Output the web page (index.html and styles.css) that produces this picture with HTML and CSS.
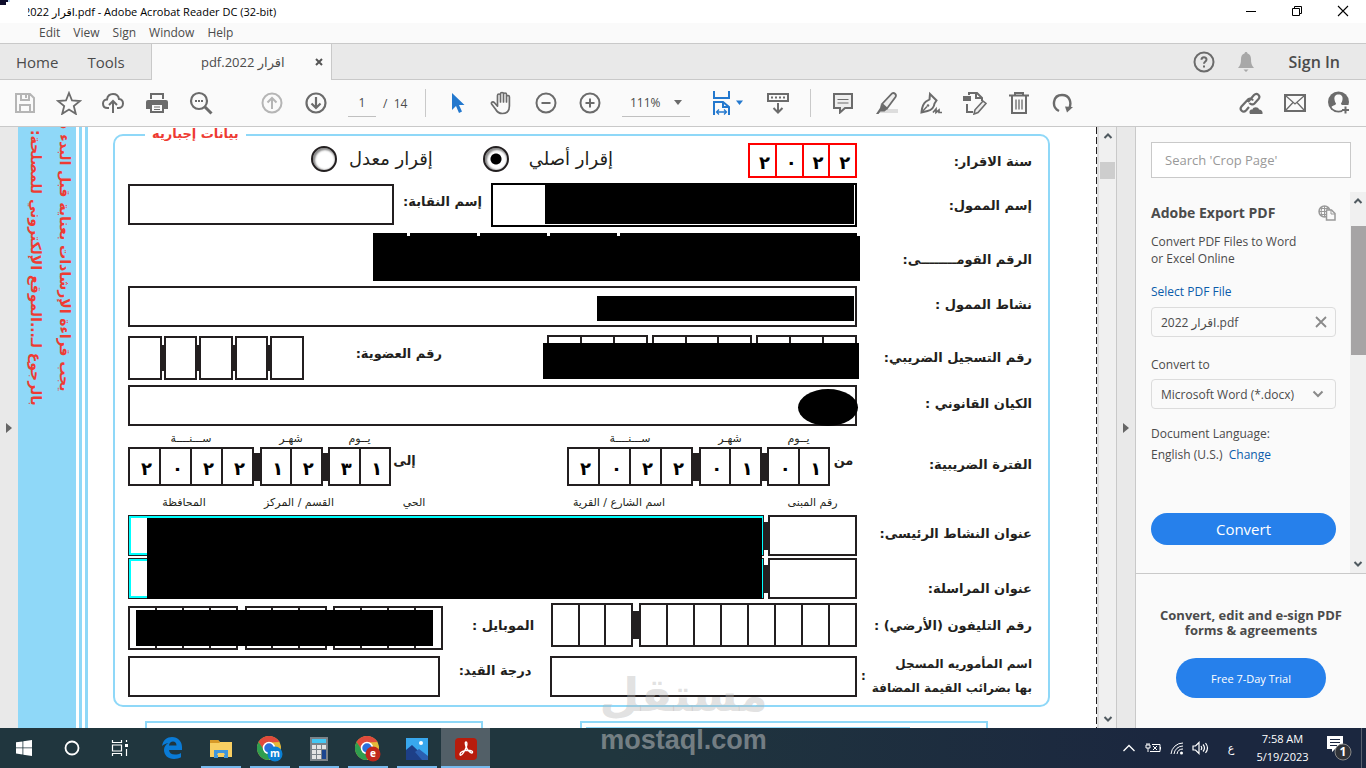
FILE: index.html
```html
<!DOCTYPE html>
<html lang="en">
<head>
<meta charset="utf-8">
<title>اقرار 2022.pdf - Adobe Acrobat Reader DC (32-bit)</title>
<link rel="stylesheet" href="styles.css">
</head>
<body>
<div class="window">
  <header class="titlebar">
    <svg class="corner" width="10" height="6" viewBox="0 0 10 6"><path d="M0 0h8v2H6v3H0z" fill="#0d0d2b"/><path d="M8 0h2v2H8z" fill="#b9d7f2"/></svg>
    <h1 class="title"><span class="title-text">اقرار 2022.pdf - Adobe Acrobat Reader DC (32-bit)</span></h1>
    <button class="win-btn" aria-label="Minimize"><svg width="12" height="12" viewBox="0 0 12 12"><path d="M1 6.500h10" stroke="#000"/></svg></button>
    <button class="win-btn" aria-label="Restore"><svg width="12" height="12" viewBox="0 0 12 12" fill="none" stroke="#000"><path d="M1.500 3.500h7v7h-7zM3.500 3.500v-2h7v7h-2"/></svg></button>
    <button class="win-btn" aria-label="Close"><svg width="12" height="12" viewBox="0 0 12 12"><path d="M1 1l10 10M11 1L1 11" stroke="#000" stroke-width="1.100"/></svg></button>
  </header>

  <nav class="menubar">
    <button>Edit</button><button>View</button><button>Sign</button><button>Window</button><button>Help</button>
  </nav>

  <div class="tabs">
    <button class="tab-link home">Home</button>
    <button class="tab-link tools">Tools</button>
    <div class="tab">
      <span class="tab-name" dir="rtl">اقرار 2022.pdf</span>
      <button class="tab-close" aria-label="Close tab"><svg width="8" height="8" viewBox="0 0 8 8"><path d="M1 1l6 6M7 1L1 7" stroke="#555" stroke-width="2"/></svg></button>
    </div>
    <div class="account">
      <button aria-label="Help"><svg width="22" height="22" viewBox="0 0 22 22" fill="none" stroke="#6b6b6b" stroke-width="2"><circle cx="11" cy="11" r="9.500"/><path d="M8.500 8.800c0-3.400 5-3.200 5-.3 0 2-2.500 1.900-2.500 4.300M11 14.500v2"/></svg></button>
      <button aria-label="Notifications"><svg width="18" height="22" viewBox="0 0 18 22" fill="#a8a8a8"><path d="M9 1c1 0 1.500.6 1.500 1.500C13 3.200 14 5.500 14 8c0 4 .5 6 3 9H1c2.500-3 3-5 3-9 0-2.500 1-4.800 3.500-5.500C7.500 1.600 8 1 9 1zM6.500 18.500h5L9 21z"/></svg></button>
      <button class="signin">Sign In</button>
    </div>
  </div>

  <div class="toolbar">
    <button class="tool" aria-label="Save"><svg width="22" height="22" viewBox="0 0 22 22" fill="none" stroke="#b5b5b5" stroke-width="2"><path d="M2 2h14l4 4v14H2zM7 2v6h8V2M12 3v3M6 20v-7h10v7"/></svg></button>
    <button class="tool" aria-label="Star"><svg width="26" height="24" viewBox="0 0 26 24" fill="none" stroke="#6b6b6b" stroke-width="1.800"><path d="M13 2l3 7.500 8 .5-6.200 5.100 2 7.700L13 18.500l-6.800 4.300 2-7.700L2 10l8-.5z"/></svg></button>
    <button class="tool" aria-label="Upload"><svg width="24" height="22" viewBox="0 0 24 22" fill="none" stroke="#6b6b6b" stroke-width="2"><path d="M8 16H6.500C3.500 16 2 14 2 11.500S4 7.500 6 7.500C6.500 4 9 2 12 2s5.500 2 6 5c2.500.3 4 2 4 4.500S20 16 17.500 16H16M12 21V9M8 13l4-4 4 4"/></svg></button>
    <button class="tool" aria-label="Print"><svg width="22" height="22" viewBox="0 0 22 22" fill="#6b6b6b"><path d="M4 1h14v6h-2V3H6v4H4zM2 8h18q2 0 2 2v7h-4v4H4v-4H0v-7q0-2 2-2zm4 5v6h10v-6zM8 14.500h6v1H8zM8 17h6v1H8z" fill-rule="evenodd"/></svg></button>
    <button class="tool" aria-label="Find"><svg width="24" height="24" viewBox="0 0 24 24" fill="none" stroke="#6b6b6b"><circle cx="10" cy="10" r="8" stroke-width="2.200"/><path d="M16 16l6.500 6.500" stroke-width="3"/><path d="M6 10h2M9 10h2M12 10h2" stroke-width="2"/></svg></button>
    <span class="space"></span>
    <button class="tool" aria-label="Previous page"><svg width="22" height="22" viewBox="0 0 22 22" fill="none" stroke="#b5b5b5" stroke-width="2"><circle cx="11" cy="11" r="9.500"/><path d="M11 17V6M6.500 10.500L11 6l4.500 4.500"/></svg></button>
    <button class="tool" aria-label="Next page"><svg width="22" height="22" viewBox="0 0 22 22" fill="none" stroke="#6b6b6b" stroke-width="2.200"><circle cx="11" cy="11" r="9.500"/><path d="M11 5v11M6.500 11.500L11 16l4.500-4.500"/></svg></button>
    <input class="page-no" aria-label="Page number" value="1">
    <span class="page-total">/&nbsp; 14</span>
    <span class="rule"></span>
    <button class="tool" aria-label="Select"><svg width="14" height="22" viewBox="0 0 14 22" fill="#2378ce"><path d="M1 1v17l4-4 3 7 3-1.500L8 13h5.500z"/></svg></button>
    <button class="tool" aria-label="Pan"><svg width="24" height="24" viewBox="0 0 24 24" fill="none" stroke="#6b6b6b" stroke-width="1.700" stroke-linecap="round" stroke-linejoin="round"><path d="M7.500 12.500V4.500c0-2 3-2 3 0V11M10.500 10V3c0-2 3-2 3 0v8M13.500 10V3.500c0-2 3-2 3 0V11M16.500 10.500V6c0-2 2.900-2 2.900 0v9c0 5-3 7.500-7 7.500-3.400 0-5.400-1.500-7-4.500L1.600 13c-.8-1.800 1.400-2.800 2.900-1.200l3 3.400v-3"/></svg></button>
    <button class="tool" aria-label="Zoom out"><svg width="22" height="22" viewBox="0 0 22 22" fill="none" stroke="#6b6b6b" stroke-width="2"><circle cx="11" cy="11" r="9.500"/><path d="M6.500 11h9"/></svg></button>
    <button class="tool" aria-label="Zoom in"><svg width="22" height="22" viewBox="0 0 22 22" fill="none" stroke="#6b6b6b" stroke-width="2"><circle cx="11" cy="11" r="9.500"/><path d="M6.500 11h9M11 6.500v9"/></svg></button>
    <span class="zoom"><select aria-label="Zoom level"><option>111%</option></select><svg width="8" height="5" viewBox="0 0 8 5"><path d="M0 0h8L4 5z" fill="#6b6b6b"/></svg></span>
    <button class="tool fit" aria-label="Fit width"><svg width="32" height="24" viewBox="0 0 32 24" fill="none" stroke="#2378ce" stroke-width="2"><path d="M2 0v7h15V0M2 24V11h9l6 5v8M11 11v5h6"/><path d="M5 21h9M7 18.500L4.500 21 7 23.500M12 18.500l2.500 2.500-2.500 2.500" stroke-width="1.300"/><path d="M24 9.500h7L27.500 14z" fill="#2378ce" stroke="none"/></svg></button>
    <button class="tool keys" aria-label="Show keyboard"><svg width="22" height="22" viewBox="0 0 22 22" fill="none" stroke="#6b6b6b" stroke-width="2"><path d="M1 2h20v7H1z"/><path d="M4 5.500h14" stroke-dasharray="2 2"/><path d="M11 11v9M6.500 16l4.500 4.500 4.500-4.500"/></svg></button>
    <span class="rule"></span>
    <button class="tool" aria-label="Comment"><svg width="20" height="22" viewBox="0 0 20 22" fill="#eee" stroke="#6b6b6b" stroke-width="2"><path d="M1 2h18v14h-7l-5 4.500V16H1z"/><path d="M4.500 7.500h11M4.500 11h11" stroke-width="1.200"/></svg></button>
    <button class="tool" aria-label="Highlight"><svg width="24" height="24" viewBox="0 0 24 24"><path d="M8 18h15v4H4z" fill="#ddd"/><path d="M7 13L17 2.500c2-1.500 5 1 3.500 3.500L12 17.500z" fill="#eee" stroke="#6b6b6b" stroke-width="1.800"/><path d="M6 13l6.500 5-3 2.500H5.500L3.500 23H1l4-6z" fill="#6b6b6b"/></svg></button>
    <button class="tool" aria-label="Sign"><svg width="24" height="24" viewBox="0 0 24 24" fill="none" stroke="#6b6b6b" stroke-width="2"><path d="M11 3l6.500 6.500-2 3c-.5 4.500-3 6.500-7 7.500l-6 1.500c.5-4 .5-8 4.500-11l3.500-2z"/><path d="M2.500 21.500L8 15.500" stroke-width="1.500"/><circle cx="9" cy="14.500" r="1.300" fill="#6b6b6b" stroke="none"/><path d="M14 21.500l3-3.500v3.500l3-2.500v2.500h3" stroke-width="1.700"/></svg></button>
    <button class="tool" aria-label="Edit pages"><svg width="24" height="24" viewBox="0 0 24 24" fill="none" stroke="#6b6b6b" stroke-width="2"><path d="M6 4V2h8l5 5v3M13 2v5h5M4 13v8h6"/><path d="M0 5h8v5H0z" fill="#6b6b6b" stroke="none"/><path d="M20 10l3 2.500-8 9-4 1.500 1-4.200z" fill="#eee" stroke-width="1.600"/></svg></button>
    <button class="tool" aria-label="Delete"><svg width="20" height="24" viewBox="0 0 20 24" fill="none" stroke="#6b6b6b" stroke-width="2"><path d="M0 4.500h20M6 4V2h8v2M3 5v17h14V5"/><path d="M7 8.500v10M10 8.500v10M13 8.500v10" stroke-width="1.300"/></svg></button>
    <button class="tool" aria-label="Rotate"><svg width="22" height="22" viewBox="0 0 22 22" fill="none" stroke="#6b6b6b" stroke-width="2.400"><path d="M7 19C-1 15 1 3 10 3c8 0 10 8 7 14"/><path d="M13 14.500l8 .5-6 5.500z" fill="#6b6b6b" stroke="none"/></svg></button>
    <span class="grow"></span>
    <button class="tool" aria-label="Share link"><svg width="24" height="24" viewBox="0 0 24 24" fill="none" stroke="#6b6b6b" stroke-width="2.200"><path d="M9 11l6-7c3-3 7 1 4.500 4l-4 4.500c-1.500 1.500-4 1-5-.5M14 9.500c-1-2-4-2.500-5.500-.5L2.500 15.500c-2.500 3 1.500 7 4.500 4l3-3.500"/><path d="M11 23c-1.500-3 .5-5 2.500-4.500.5-3 6-3 6.500 0 2.500-.3 4 2 3.500 4.500z" fill="#6b6b6b" stroke="none"/></svg></button>
    <button class="tool" aria-label="Email"><svg width="22" height="18" viewBox="0 0 22 18" fill="none" stroke="#6b6b6b"><path d="M1 1h20v16H1z" stroke-width="2"/><path d="M2 2l9 8 9-8M2 16l7-7.500M20 16l-7-7.500" stroke-width="1.300"/></svg></button>
    <button class="tool" aria-label="Add person"><svg width="22" height="24" viewBox="0 0 22 24"><circle cx="10.500" cy="11" r="10.500" fill="#6b6b6b"/><path d="M10.500 3.500c3 0 4.500 2 4 5-.2 2-1 3-1.500 4 0 2 3 1.500 4.500 3.500-3 5-11 5-14 0 1.500-2 4.500-1.500 4.500-3.500-.5-1-1.300-2-1.500-4-.5-3 1-5 4-5zM13 14h9v9h-7z" fill="#fafafa"/><path d="M17.500 15.500v7M14 19h7" stroke="#6b6b6b" stroke-width="2"/></svg></button>
  </div>

  <main class="main">
    <aside class="left-rail"><svg width="6" height="10" viewBox="0 0 6 10"><path d="M0 0l6 5-6 5z" fill="#666"/></svg></aside>

    <section class="doc" lang="ar">
      <div class="notice">
        <p class="notice-b">بالرجوع لـ...الموقع الإلكتروني للمصلحة:</p>
        <p class="notice-a">يجب قراءة الإرشادات بعناية قبل البدء في</p>
      </div>
      <div class="stripes"></div>

      <form class="sheet">
        <fieldset class="form">
          <legend dir="rtl">بيانات إجباريه</legend>

          <div class="row">
            <div class="fields end">
              <label class="choice" dir="rtl"><span>إقرار معدل</span><input type="radio" name="kind"></label>
              <label class="choice original" dir="rtl"><span>إقرار أصلي</span><input type="radio" name="kind" checked></label>
              <div class="cells year"><input aria-label="سنة 1" value="٢"><input aria-label="سنة 2" value="٠"><input aria-label="سنة 3" value="٢"><input aria-label="سنة 4" value="٢"></div>
            </div>
            <div class="label d4" dir="rtl">سنة الاقرار:</div>
          </div>

          <div class="row">
            <div class="fields">
              <input class="box syndicate" id="syndicate" dir="rtl">
              <label class="label inner" for="syndicate" dir="rtl">إسم النقابة:</label>
              <span class="holder name"><input class="box tall" id="payer"><i class="redact payer"></i></span>
            </div>
            <label class="label d8" for="payer" dir="rtl">إسم الممول:</label>
          </div>

          <div class="row">
            <div class="fields end">
              <div class="national"><i class="n1"></i><i class="n2"></i><i class="n2"></i><i class="n2"></i><i class="n3"></i><b class="redact nid"></b></div>
            </div>
            <div class="label d12" dir="rtl">الرقم القومــــــــى:</div>
          </div>

          <div class="row">
            <div class="fields holder"><input class="box" id="activity"><i class="redact activity"></i></div>
            <label class="label d4" for="activity" dir="rtl">نشاط الممول :</label>
          </div>

          <div class="row">
            <div class="fields">
              <div class="member"><input aria-label="عضوية 1"><i></i><input aria-label="عضوية 2"><i></i><input aria-label="عضوية 3"><i></i><input aria-label="عضوية 4"><i></i><input aria-label="عضوية 5"></div>
              <div class="label inner wide" dir="rtl">رقم العضوية:</div>
              <div class="tax holder">
                <div class="cells"><input aria-label="ت1"><input aria-label="ت2"><input aria-label="ت3"></div>
                <div class="cells"><input aria-label="ت4"><input aria-label="ت5"><input aria-label="ت6"></div>
                <div class="cells"><input aria-label="ت7"><input aria-label="ت8"><input aria-label="ت9"></div>
                <i class="redact taxno"></i>
              </div>
            </div>
            <div class="label d8" dir="rtl">رقم التسجيل الضريبي:</div>
          </div>

          <div class="row">
            <div class="fields holder"><input class="box" id="entity"><i class="redact entity"></i></div>
            <label class="label d4" for="entity" dir="rtl">الكيان القانوني :</label>
          </div>

          <div class="row">
            <div class="fields dates">
              <div class="date">
                <span class="cap">ســـنــــة</span><span></span><span class="cap">شهـر</span><span></span><span class="cap">يــوم</span>
                <div class="cells"><input aria-label="إلى سنة 1" value="٢"><input aria-label="إلى سنة 2" value="٠"><input aria-label="إلى سنة 3" value="٢"><input aria-label="إلى سنة 4" value="٢"></div><i></i>
                <div class="cells"><input aria-label="إلى شهر 1" value="١"><input aria-label="إلى شهر 2" value="٢"></div><i></i>
                <div class="cells"><input aria-label="إلى يوم 1" value="٣"><input aria-label="إلى يوم 2" value="١"></div>
              </div>
              <span class="side">إلى</span>
              <span class="grow"></span>
              <div class="date">
                <span class="cap">ســـنــــة</span><span></span><span class="cap">شهـر</span><span></span><span class="cap">يــوم</span>
                <div class="cells"><input aria-label="من سنة 1" value="٢"><input aria-label="من سنة 2" value="٠"><input aria-label="من سنة 3" value="٢"><input aria-label="من سنة 4" value="٢"></div><i></i>
                <div class="cells"><input aria-label="من شهر 1" value="٠"><input aria-label="من شهر 2" value="١"></div><i></i>
                <div class="cells"><input aria-label="من يوم 1" value="٠"><input aria-label="من يوم 2" value="١"></div>
              </div>
              <span class="side">من</span>
            </div>
            <div class="label d20" dir="rtl">الفترة الضريبية:</div>
          </div>

          <div class="row">
            <div class="fields heads">
              <span dir="rtl">المحافظة</span><span dir="rtl">القسم / المركز</span><span dir="rtl">الحي</span><span dir="rtl">اسم الشارع / القرية</span><span dir="rtl">رقم المبنى</span>
            </div>
            <div></div>
          </div>

          <div class="row">
            <div class="fields address holder"><input class="box cyan" id="addr"><i class="link"></i><input class="box" aria-label="رقم المبنى"><b class="redact addr"></b></div>
            <label class="label d4" for="addr" dir="rtl">عنوان النشاط الرئيسى:</label>
          </div>

          <div class="row">
            <div class="fields address"><input class="box cyan" id="mail"><i class="link"></i><input class="box" aria-label="رقم مبنى المراسلة"></div>
            <label class="label d16" for="mail" dir="rtl">عنوان المراسلة:</label>
          </div>

          <div class="row">
            <div class="fields">
              <div class="mobile holder">
                <div class="cells m4"><input aria-label="م1"><input aria-label="م2"><input aria-label="م3"><input aria-label="م4"></div>
                <div class="cells m3"><input aria-label="م5"><input aria-label="م6"><input aria-label="م7"></div>
                <div class="cells m4"><input aria-label="م8"><input aria-label="م9"><input aria-label="م10"><input aria-label="م11"></div>
                <i class="redact mobno"></i>
              </div>
              <div class="label inner mob" dir="rtl">الموبايل :</div>
              <div class="phone">
                <div class="cells p3"><input aria-label="ه1"><input aria-label="ه2"><input aria-label="ه3"></div><i></i>
                <div class="cells p8"><input aria-label="ه4"><input aria-label="ه5"><input aria-label="ه6"><input aria-label="ه7"><input aria-label="ه8"><input aria-label="ه9"><input aria-label="ه10"><input aria-label="ه11"></div>
              </div>
            </div>
            <div class="label d8" dir="rtl">رقم التليفون (الأرضي) :</div>
          </div>

          <div class="row">
            <div class="fields">
              <input class="box grade" id="grade">
              <label class="label inner grade-l" for="grade" dir="rtl">درجة القيد:</label>
              <input class="box office" id="office">
            </div>
            <label class="label two" for="office" dir="rtl"><span>اسم المأموريه المسجل<br>بها بضرائب القيمة المضافة</span><span>:</span></label>
          </div>
        </fieldset>
        <div class="next"><div class="next-a"></div><div class="next-b"><div></div></div></div>
      </form>
      <div class="cutline"></div>
    </section>

    <div class="scroll doc-scroll">
      <svg width="10" height="6" viewBox="0 0 10 6"><path d="M1.500 5L5 1.500 8.500 5" fill="none" stroke="#505a60" stroke-width="2"/></svg>
      <div class="thumb"></div>
      <svg width="10" height="6" viewBox="0 0 10 6"><path d="M1.500 1L5 4.500 8.500 1" fill="none" stroke="#505a60" stroke-width="2"/></svg>
    </div>
    <div class="right-rail"><svg width="6" height="10" viewBox="0 0 6 10"><path d="M0 0l6 5-6 5z" fill="#666"/></svg></div>

    <aside class="panel">
      <input class="search" aria-label="Search" placeholder="Search 'Crop Page'">
      <div class="panel-body">
        <div class="panel-content">
          <div class="panel-head"><h2>Adobe Export PDF</h2>
            <svg width="18" height="16" viewBox="0 0 18 16" fill="none" stroke="#999"><circle cx="6.500" cy="6.500" r="5.500" stroke-width="1.500"/><path d="M1 6.500h10M6.500 1v11M2.500 3.500h8M2.500 9.500h6M4 2q-2 4.500 0 9M9 2q1.500 2 1 4" /><path d="M8.500 5h5l3.500 3.500V15H8.500z" fill="#fafafa" stroke-width="1.500"/><path d="M13 5v4h4"/></svg></div>
          <p class="desc">Convert PDF Files to Word<br>or Excel Online</p>
          <a class="select-file" href="#">Select PDF File</a>
          <div class="file"><span>اقرار 2022.pdf</span><button aria-label="Remove file"><svg width="12" height="12" viewBox="0 0 12 12"><path d="M1 1l10 10M11 1L1 11" stroke="#8a8a8a" stroke-width="1.800"/></svg></button></div>
          <label class="convert-label" for="fmt">Convert to</label>
          <div class="format"><select id="fmt"><option>Microsoft Word (*.docx)</option></select><svg width="12" height="8" viewBox="0 0 12 8"><path d="M1.500 1.500L6 6l4.500-4.500" fill="none" stroke="#8a8a8a" stroke-width="2"/></svg></div>
          <p class="language">Document Language:<br>English (U.S.) &nbsp;<a href="#">Change</a></p>
          <button class="convert">Convert</button>
        </div>
        <div class="scroll panel-scroll">
          <svg width="10" height="6" viewBox="0 0 10 6"><path d="M1.500 5L5 1.500 8.500 5" fill="none" stroke="#505a60" stroke-width="2"/></svg>
          <div class="thumb"></div>
          <svg width="10" height="6" viewBox="0 0 10 6"><path d="M1.500 1L5 4.500 8.500 1" fill="none" stroke="#505a60" stroke-width="2"/></svg>
        </div>
      </div>
      <div class="promo">
        <p>Convert, edit and e-sign PDF<br>forms &amp; agreements</p>
        <button>Free 7-Day Trial</button>
      </div>
    </aside>
  </main>

  <footer class="taskbar">
    <button aria-label="Start"><svg width="16" height="16" viewBox="0 0 16 16" fill="#fff"><path d="M0 2.300l6.500-.9v6.100H0zM7.300 1.300L16 0v7.500H7.300zM0 8.300h6.500v6.200L0 13.600zM7.300 8.300H16V16l-8.700-1.300z"/></svg></button>
    <button aria-label="Search"><svg width="16" height="16" viewBox="0 0 16 16"><circle cx="8" cy="8" r="6.500" fill="none" stroke="#fff" stroke-width="1.800"/></svg></button>
    <button aria-label="Task view"><svg width="18" height="16" viewBox="0 0 18 16" fill="none" stroke="#fff" stroke-width="1.200"><path d="M1.500 0v2.500h9V0M1.500 5h9v6h-9zM1.500 16v-2.500h9V16M15.500 0v2M15.500 9v7"/><path d="M14 4h3v3h-3z" fill="#fff" stroke="none"/></svg></button>
    <button class="app" aria-label="Edge"><svg width="20" height="22" viewBox="0 0 20 22"><path d="M0 9C1 3 5 0 10 0c6 0 10 4.500 10 10v3H7c.3 3 2.500 4.500 6 4.500 2.300 0 4.300-.6 6-1.600v4.400c-2 1.200-4.500 1.700-7 1.700C6 22 2 18 2 13c0-3 1.600-5.600 4.500-7C3.500 6.500 1.500 7.500 0 9zm7-.5h7.500C14.500 6 13 4.500 11 4.500S7.300 6 7 8.500z" fill="#0a7bd6"/></svg></button>
    <button class="app open" aria-label="File Explorer"><svg width="22" height="20" viewBox="0 0 22 20"><path d="M0 1h8l2 2h12v15H0z" fill="#f8cf62"/><path d="M0 1h8l2 3H0z" fill="#d89a28"/><path d="M4 11h14v8h-4v-3H8v3H4z" fill="#3f96dc"/><path d="M8 14h6l1 2H7z" fill="#f8cf62"/></svg></button>
    <button class="app open" aria-label="Chrome m"><svg width="26" height="26" viewBox="0 0 26 26"><circle cx="12" cy="12" r="12" fill="#e3b93a"/><path d="M1.600 6A12 12 0 0 1 22.400 6L12 6.500 6.800 15z" fill="#e04a3c"/><path d="M1.600 6A12 12 0 0 0 12 24l5-9-10-1z" fill="#2f9e4f"/><circle cx="12" cy="12" r="5.500" fill="#2b6fdc" stroke="#fff" stroke-width="1.500"/><circle cx="18" cy="18" r="7.500" fill="#0a80d4"/><text x="18" y="21" font-size="10" font-weight="700" text-anchor="middle" fill="#fff">m</text></svg></button>
    <button class="app open" aria-label="Calculator"><svg width="18" height="24" viewBox="0 0 18 24"><path d="M0 0h18v24H0z" fill="#7b8389"/><path d="M2 2h14v4H2z" fill="#43c7f4"/><path d="M2 8h4v4H2zM7 8h4v4H7zM12 8h4v4h-4zM2 13h4v4H2zM7 13h4v4H7zM2 18h4v4H2zM7 18h4v4H7z" fill="#e4e4e4"/><path d="M12 13h4v9h-4z" fill="#1c4690"/></svg></button>
    <button class="app open" aria-label="Chrome e"><svg width="26" height="26" viewBox="0 0 26 26"><circle cx="12" cy="12" r="12" fill="#e3b93a"/><path d="M1.600 6A12 12 0 0 1 22.400 6L12 6.500 6.800 15z" fill="#e04a3c"/><path d="M1.600 6A12 12 0 0 0 12 24l5-9-10-1z" fill="#2f9e4f"/><circle cx="12" cy="12" r="5.500" fill="#2b6fdc" stroke="#fff" stroke-width="1.500"/><circle cx="18" cy="18" r="7.500" fill="#c0271c"/><text x="18" y="21" font-size="10" font-weight="700" text-anchor="middle" fill="#fff">e</text></svg></button>
    <button class="app open" aria-label="Photos"><svg width="22" height="22" viewBox="0 0 22 22"><path d="M0 0h22v22H0z" fill="#38a8ee"/><path d="M0 12l6-5 16 15H0z" fill="#1d3f87"/><path d="M9 14l4-3 9 7v4h-6z" fill="#2b5fb0"/><circle cx="15" cy="5" r="2" fill="#fff"/></svg></button>
    <button class="app open active" aria-label="Acrobat Reader"><svg width="22" height="22" viewBox="0 0 22 22"><rect width="22" height="22" rx="4" fill="#b71c0c"/><path d="M5 16c0-2 4-3.500 8-3.700 3 0 5 .8 4.500 2.200-1 2-5.500-2.500-6.500-6C10.200 6 10 4 11 4s1.300 2 .3 5C10 13 7 17.500 5.500 17.300 5 17.300 5 16.700 5 16z" fill="none" stroke="#fff" stroke-width="1.400"/></svg></button>
    <span class="grow"></span>
    <button class="tray" aria-label="Show hidden icons"><svg width="12" height="8" viewBox="0 0 12 8"><path d="M.5 7L6 1.500 11.500 7" fill="none" stroke="#fff" stroke-width="1.300"/></svg></button>
    <button class="tray" aria-label="Battery"><svg width="17" height="12" viewBox="0 0 17 12" fill="none" stroke="#fff"><path d="M1 3h4v3H1zM2 1v2M4 1v2M3 6v4M7 2.500h8v7H5M15.500 5v2.500M8 4l4 4M12 4L8 8"/></svg></button>
    <button class="tray" aria-label="Network"><svg width="14" height="14" viewBox="0 0 14 14" fill="none" stroke="#fff"><path d="M1 13A12 12 0 0 1 13 2M4 13a9 9 0 0 1 9-8M7 13a6 6 0 0 1 6-5"/><circle cx="11.500" cy="12" r="1.500" fill="#fff" stroke="none"/></svg></button>
    <button class="tray" aria-label="Volume"><svg width="18" height="14" viewBox="0 0 18 14" fill="none" stroke="#fff" stroke-width="1.200"><path d="M1 5h2.500L7 1.500v11L3.500 9H1zM9 5q1.500 2 0 4M11 3.500q3 3.500 0 7M13.500 2q4 5 0 10"/></svg></button>
    <button class="lang" lang="ar">ع</button>
    <button class="clock">7:58 AM<br>5/19/2023</button>
    <button class="notes" aria-label="Notifications"><svg width="26" height="26" viewBox="0 0 26 26"><path d="M1 1h16v13H9l-3 3v-3H1z" fill="#fff"/><path d="M4 4.500h10M4 7.500h10M4 10.500h7" stroke="#1c2740"/><circle cx="17" cy="17" r="8" fill="#303338" stroke="#888"/><text x="17" y="21" font-size="12" font-weight="700" text-anchor="middle" fill="#fff">1</text></svg></button>
  </footer>

  <div class="watermark"><span class="wm-ar" lang="ar">مستقل</span><span class="wm-en">mostaql.com</span></div>
</div>
</body>
</html>
```
FILE: styles.css
```css
* { box-sizing: border-box; }
body { margin: 0; font-family: "Open Sans", "DejaVu Sans", sans-serif; font-size: 12px; color: #4b4b4b; }
button { border: 0; padding: 0; background: none; font: inherit; color: inherit; display: flex; align-items: center; justify-content: center; }
input, select { font: inherit; color: inherit; border-radius: 0; margin: 0; }
p, h1, h2 { margin: 0; }
svg { display: block; flex: none; }
.window { position: relative; height: 100vh; display: flex; flex-direction: column; overflow: hidden; background: #fafafa; }
.grow { flex: 1; }

.titlebar { height: 23px; display: flex; align-items: flex-start; background: #fff; }
.corner { margin-right: 18px; }
.title { flex: 1; display: flex; overflow: hidden; font-size: 11px; line-height: 23px; font-weight: 400; color: #000; white-space: nowrap; }
.title-text { margin-left: -4px; }
.win-btn { width: 46px; height: 21px; }

.menubar { height: 20px; display: flex; gap: 13px; padding-left: 39px; background: #fafafa; }
.menubar button { line-height: 20px; }

.tabs { height: 37px; display: flex; background: #e9e9e9; border-top: 1px solid #c9c9c9; border-bottom: 1px solid #c9c9c9; }
.tab-link { font-size: 15px; }
.home { margin-left: 16px; }
.tools { margin-left: 29px; margin-right: 26px; }
.tab { width: 181px; margin-bottom: -1px; display: flex; align-items: center; justify-content: flex-end; background: #fafafa; border-left: 1px solid #c9c9c9; border-right: 1px solid #c9c9c9; padding-right: 8px; }
.tab-name { font-size: 13px; margin-right: 30px; }
.account { margin-left: auto; display: flex; align-items: center; gap: 22px; padding-right: 26px; }
.signin { font-size: 16px; font-weight: 600; margin-left: 12px; }

.toolbar { height: 47px; display: flex; align-items: center; padding-left: 3px; padding-right: 5px; background: #fafafa; border-bottom: 1px solid #c9c9c9; }
.tool { width: 44px; height: 44px; flex: none; }
.space { width: 27px; }
.page-no { width: 28px; height: 28px; margin: 0 7px 0 10px; padding: 0; border: 0; border-bottom: 1px solid #c0c0c0; background: none; text-align: center; }
.page-total { width: 42px; }
.rule { width: 1px; height: 28px; background: #c9c9c9; margin-right: 10px; }
.zoom { width: 68px; height: 28px; margin: 0 10px; display: grid; align-items: center; border-bottom: 1px solid #c0c0c0; }
.zoom select, .zoom svg { grid-area: 1 / 1; }
.zoom select { appearance: none; border: 0; background: none; padding: 0 8px; }
.zoom svg { justify-self: end; margin-right: 8px; }
.fit { padding-left: 11px; }
.keys { margin: 0 10px 0 12px; }

.main { flex: 1; min-height: 0; display: flex; }
.left-rail { width: 18px; display: flex; align-items: center; justify-content: center; background: #e9e9e9; }
.doc { flex: 1; min-width: 0; display: flex; overflow: hidden; background: #fff; font-family: "DejaVu Sans", sans-serif; color: #231f20; }
.notice { width: 58px; flex: none; display: flex; align-items: flex-start; justify-content: center; gap: 4px; padding-left: 5px; background: #8fd8f8; color: #ee3b33; font-size: 14px; font-weight: 700; }
.notice p { writing-mode: vertical-rl; direction: rtl; white-space: nowrap; line-height: 25px; }
.notice-a { height: 264px; }
.notice-b { height: 279px; }
.stripes { width: 12px; flex: none; border-left: 3px solid #fff; border-right: 3px solid #8fd8f8; background: linear-gradient(to right, #8fd8f8 50%, #fff 50%); }
.sheet { flex: 1; min-width: 0; padding: 0 46px 0 25px; }
.cutline { width: 1px; background: repeating-linear-gradient(to bottom, #231f20 0 7px, #fff 7px 10px); }

.form { margin: 0; min-width: 0; padding: 0 16px 0 13px; border: 2px solid #8fd8f8; border-radius: 10px; display: grid; grid-template-rows: 40px 50px 53px 49px 50px 45px 64px 21px 43px 45px 53px 49px; }
.form legend { height: 16px; margin-left: 17px; padding: 0 7px; line-height: 14px; font-size: 13px; font-weight: 700; color: #ee3b33; }
.row { display: grid; grid-template-columns: minmax(0, 1fr) 175px; align-items: start; }
.fields { display: flex; align-items: flex-start; justify-content: space-between; }
.end { justify-content: flex-end; }
.holder { position: relative; }
.label { font-size: 13px; line-height: 30px; font-weight: 700; white-space: nowrap; }
.d4 { padding-top: 4px; }
.d8 { padding-top: 8px; }
.d12 { padding-top: 12px; }
.d16 { padding-top: 16px; }
.d20 { padding-top: 20px; }
.inner { padding-top: 4px; }
.box { width: 100%; height: 41px; border: 2px solid #231f20; background: #fff; padding: 0 8px; }
.redact { position: absolute; background: #000; }

.choice { display: flex; align-items: center; gap: 12px; height: 32px; margin-right: 50px; font-size: 18px; line-height: 22px; }
.choice.original { gap: 20px; margin-right: 135px; }
.choice input { appearance: none; width: 26px; height: 26px; border: 2px solid #231f20; border-radius: 50%; background: #fff; box-shadow: inset 1px 1px 2px 1px #888; }
.choice input:checked { background: radial-gradient(circle, #000 0 5px, #fff 6px); }

.cells { display: flex; border: 2px solid #231f20; border-left: 0; }
.cells input { flex: 1; min-width: 0; width: 0; padding: 4px 0 0 4px; border: 0; border-left: 2px solid #231f20; background: #fff; color: #000; text-align: center; font-size: 18px; font-weight: 700; }
.year { width: 109px; height: 35px; border-color: #f00; }
.year input { border-color: #f00; }

.syndicate { width: 266px; margin-top: 1px; }
.name { width: 366px; }
.tall { height: 44px; border-color: #000; }
.payer { left: 54px; right: 3px; top: 1px; height: 40px; }
.national { position: relative; width: 484px; height: 48px; display: flex; gap: 3px; }
.national i { background: #000; height: 8px; }
.n1 { width: 34px; }
.n2 { width: 67px; }
.n3 { flex: 1; }
.nid { left: 0; right: -3px; top: 3px; bottom: 0; }
.activity { width: 257px; right: 3px; top: 10px; height: 25px; }
.member { width: 176px; height: 44px; display: flex; align-items: center; margin-top: 1px; }
.member input { flex: 1; width: 0; min-width: 0; align-self: stretch; border: 2px solid #231f20; padding: 0; background: #fff; }
.member i { width: 2px; height: 26px; background: #231f20; }
.wide { margin-left: auto; margin-right: 105px; }
.tax { width: 310px; display: flex; gap: 4px; }
.tax .cells { flex: 1; height: 42px; }
.taxno { left: -4px; right: -2px; top: 8px; height: 36px; }
.entity { width: 60px; height: 37px; right: -1px; top: 4px; border-radius: 50%; }

.date { width: 263px; display: grid; grid-template-columns: 126px 1fr 63px 1fr 63px; align-items: center; }
.cap { height: 17px; line-height: 18px; font-size: 11px; text-align: center; }
.date .cells { height: 39px; }
.date i { height: 28px; background: #231f20; }
.side { width: 27px; padding-top: 18px; text-align: center; font-size: 13px; line-height: 26px; font-weight: 700; }
.heads { display: grid; grid-template-columns: 112px 112px 112px 1fr 89px; gap: 3px; text-align: center; font-size: 11px; line-height: 18px; white-space: nowrap; }
.address { align-items: center; }
.address .box { width: 89px; }
.address .cyan { flex: 1; border-width: 1px; box-shadow: inset 0 0 0 2px #0ff; }
.link { width: 4px; height: 28px; background: #231f20; }
.addr { left: 19px; right: 95px; top: 3px; height: 81px; }

.mobile { width: 315px; display: flex; justify-content: space-between; margin-top: 3px; }
.mobile .cells { height: 44px; }
.m4 { width: 110px; }
.m3 { width: 82px; }
.mobno { left: 8px; right: 10px; top: 4px; height: 36px; }
.mob { padding-top: 8px; margin-left: 12px; }
.phone { width: 306px; display: flex; align-items: center; }
.phone .cells { height: 44px; }
.phone i { flex: 1; height: 28px; background: #231f20; }
.p3 { width: 82px; }
.p8 { width: 218px; }
.grade { width: 312px; }
.grade-l { padding-top: 0; }
.office { width: 307px; }
.two { display: flex; justify-content: space-between; align-items: center; margin-top: -4px; font-size: 12px; line-height: 24px; padding-left: 4px; }
.next { display: flex; gap: 97px; padding: 14px 0 0 32px; }
.next-a, .next-b { border: 2px solid #8fd8f8; border-bottom: 0; height: 20px; }
.next-a { width: 338px; }
.next-b { width: 408px; padding: 4px 76px 0 4px; }
.next-b div { height: 2px; background: #8fd8f8; }

.scroll { display: flex; flex-direction: column; align-items: center; background: #f0f0f0; }
.doc-scroll { width: 20px; border-left: 2px solid #ddd; border-right: 1px solid #c9c9c9; padding: 6px 0; }
.doc-scroll .thumb { width: 15px; height: 17px; margin: 23px 0 auto; background: #cdcdcd; }
.right-rail { width: 19px; display: flex; align-items: center; justify-content: center; background: #e9e9e9; border-right: 1px solid #c9c9c9; }

.panel { width: 230px; display: flex; flex-direction: column; background: #fafafa; }
.search { width: 200px; height: 36px; margin: 15px 0 14px 15px; padding: 0 13px; border: 1px solid #c9c9c9; background: #fff; font-size: 13px; }
.search::placeholder { color: #999; }
.panel-body { display: flex; height: 381px; }
.panel-content { flex: 1; padding: 10px 14px 0 15px; }
.panel-head { display: flex; justify-content: space-between; align-items: center; }
h2 { font-size: 14px; line-height: 22px; font-weight: 700; }
.desc { margin-top: 9px; line-height: 17px; }
.select-file { display: block; margin-top: 16px; line-height: 17px; color: #0b5cab; text-decoration: none; }
.file, .format { height: 30px; border: 1px solid #dcdcdc; border-radius: 4px; font-size: 12px; }
.file { margin-top: 7px; display: flex; align-items: center; justify-content: space-between; padding: 0 8px 0 9px; }
.convert-label { display: block; margin-top: 19px; line-height: 17px; }
.format { margin-top: 6px; display: grid; align-items: center; }
.format select, .format svg { grid-area: 1 / 1; }
.format select { appearance: none; border: 0; background: none; padding: 0 9px; }
.format svg { justify-self: end; margin-right: 11px; }
.language { margin-top: 14px; line-height: 21px; }
.language a { color: #0b5cab; text-decoration: none; }
.convert { width: 100%; height: 32px; margin-top: 48px; border-radius: 16px; background: #2680eb; color: #fff; font-size: 15px; }
.panel-scroll { width: 16px; padding: 6px 0; }
.panel-scroll .thumb { width: 15px; height: 129px; margin: 22px 0 auto; background: #a6a4a5; }
.promo { flex: 1; border-top: 1px solid #c9c9c9; padding-top: 34px; display: flex; flex-direction: column; align-items: center; }
.promo p { font-size: 13px; line-height: 15px; font-weight: 700; text-align: center; }
.promo button { width: 150px; height: 40px; margin-top: 20px; border-radius: 20px; background: #2680eb; color: #fff; font-size: 11px; }

.taskbar { height: 40px; display: flex; color: #fff; background: linear-gradient(to right, #20363e, #20363e 45%, #1b273f 85%); }
.taskbar > button { width: 48px; }
.taskbar > .app { width: 49px; border-bottom: 2px solid transparent; padding-top: 2px; }
.taskbar > .app:nth-child(4) { margin-left: 3px; }
.taskbar > .open { background: linear-gradient(#76b9ed, #76b9ed) center bottom / 40px 2px no-repeat; border-bottom: 0; }
.taskbar > .active { background: linear-gradient(to top, #76b9ed 2px, #525f67 2px); }
.taskbar > .tray { width: 24px; }
.taskbar > .lang { width: 36px; font-family: "DejaVu Sans", sans-serif; font-size: 11px; }
.taskbar > .clock { width: 67px; font-size: 11px; line-height: 18px; text-align: center; }
.taskbar > .notes { width: 46px; border-right: 1px solid #59616f; margin-right: 4px; }

.watermark { position: absolute; left: 600px; bottom: 14px; width: 167px; display: flex; flex-direction: column; align-items: center; color: rgba(180, 180, 180, 0.4); font-weight: 700; pointer-events: none; }
.wm-ar { font-family: "DejaVu Sans", sans-serif; font-size: 46px; line-height: 62px; }
.wm-en { font-family: "Liberation Sans", sans-serif; font-size: 27px; line-height: 28px; color: rgba(200, 200, 200, 0.5); }
```
